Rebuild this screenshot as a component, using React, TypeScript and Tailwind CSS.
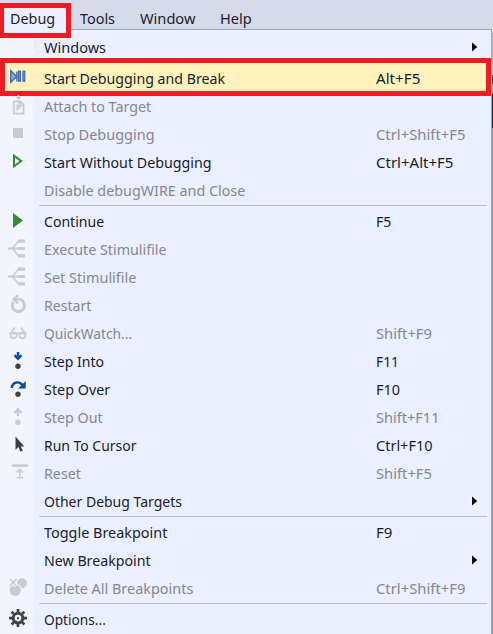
import { useLayoutEffect, useRef, type ReactNode } from 'react';

// Text condensed horizontally to a fixed advance width.
function Label({ text, width }: { text: string; width: number }) {
  const ref = useRef<HTMLSpanElement>(null);
  useLayoutEffect(() => {
    const el = ref.current;
    if (!el) return;
    el.style.transform = `scaleX(${width / el.offsetWidth})`;
  }, [text, width]);
  return (
    <span ref={ref} className="inline-block origin-left whitespace-pre">
      {text}
    </span>
  );
}

type IconName =
  | 'break' | 'attach' | 'stop' | 'playOutline' | 'play' | 'branch' | 'restart'
  | 'glasses' | 'into' | 'over' | 'out' | 'cursor' | 'reset' | 'breakpoints' | 'gear';

const g = '#c9cbd3';
const blue = '#00539c';

// Every drawing uses a 34 x 28 cell, the size of the gutter beside a row.
const icons: Record<IconName, ReactNode> = {
  break: (
    <g stroke="#3f61a8" strokeWidth="1.2">
      <path d="M10.7 6.5V18.5l6-6z" fill="#82a9e4" />
      <path d="M16.9 7.5v10" strokeWidth="1.4" />
      <rect x="18.6" y="7.2" width="1.8" height="10" fill="#8db4ee" />
      <rect x="23" y="7.2" width="1.8" height="10" fill="#8db4ee" />
    </g>
  ),
  attach: (
    <g fill="none" stroke={g} strokeWidth="1.7">
      <path d="M13.8 9.3h6.5l3.3 3.3v9.1h-9.8zM19.5 9.5v4h4" />
      <path d="M16.5 12v7l4.5-3.5z" fill={g} stroke="none" />
      <path d="M18.5 3v4M16.5 5l2 2 2-2" />
    </g>
  ),
  stop: <path d="M13 8h10v10H13z" fill={g} />,
  playOutline: <path d="M14 7.8v10.6l7.3-5.3z" fill="#f2f4fe" stroke="#388a34" strokeWidth="2" />,
  play: <path d="M13 5v15l10-7.5z" fill="#388a34" />,
  branch: (
    <g fill="none" stroke={g}>
      <path d="M8 12.5h16" strokeWidth="2.2" />
      <path d="M12.5 12.5l5.5-7h2M12.5 12.5l5.5 7h2" strokeWidth="1.5" />
      <path d="M18 5.2h7M18 19.8h7M19 12.5h6" strokeWidth="3.2" />
    </g>
  ),
  restart: (
    <g fill="none" stroke={g}>
      <path d="M13.4 9.8a6.1 6.1 0 1 0 7.6-2" strokeWidth="3" />
      <path d="M12.5 7.3h9M18 3.5l-4.5 3.8 4.5 3.8" strokeWidth="2.3" />
    </g>
  ),
  glasses: (
    <g fill="none" stroke={g} strokeWidth="1.7">
      <circle cx="13.6" cy="15.3" r="3" />
      <circle cx="22.4" cy="15.3" r="3" />
      <path d="M9 13.5h18M10.5 13.5l4.5-6M25.5 13.5L21 7.5" />
    </g>
  ),
  into: (
    <g>
      <path d="M18 4v6M14.5 7.2L18 10.8l3.5-3.6" fill="none" stroke={blue} strokeWidth="2.4" />
      <circle cx="18" cy="18.3" r="2.7" fill="#424242" />
    </g>
  ),
  over: (
    <g>
      <path d="M11.5 12C12.8 5.5 19.5 4.5 23 10" fill="none" stroke={blue} strokeWidth="2.4" />
      <path d="M25.7 5v7.5h-7.5z" fill={blue} />
      <circle cx="18" cy="18.3" r="2.7" fill="#424242" />
    </g>
  ),
  out: (
    <g>
      <path d="M18 12V6M14.5 8.8L18 5.2l3.5 3.6" fill="none" stroke={g} strokeWidth="2.4" />
      <circle cx="18" cy="18.3" r="2.7" fill={g} />
    </g>
  ),
  cursor: <path d="M15.5 4.5v13.3l3-2.7 2 4.7 2.3-1.1-2-4.3h3.5z" fill="#3c3c42" />,
  reset: (
    <g fill="none" stroke={g}>
      <path d="M12 5.6h16" strokeWidth="2.6" />
      <path d="M19.8 10v8M16.5 12.6l3.3-3.3 3.3 3.3M16.5 17.8h6.6" strokeWidth="1.6" />
    </g>
  ),
  breakpoints: (
    <g>
      <circle cx="22" cy="9.2" r="5" fill={g} />
      <circle cx="15.2" cy="16.3" r="6.7" fill="#f2f4fe" />
      <circle cx="15.2" cy="16.3" r="5.6" fill={g} />
      <path d="M10 5l6.5 7M16.5 5L10 12" stroke="#f2f4fe" strokeWidth="3.6" />
      <path d="M10 5l6.5 7M16.5 5L10 12" stroke={g} strokeWidth="1.6" />
    </g>
  ),
  gear: (
    <g fill="none" stroke="#424242">
      <circle cx="18" cy="13.1" r="4.8" strokeWidth="3" />
      <path
        d="M18 4.1v3M18 19.1v3M9 13.1h3M24 13.1h3M11.6 6.7l2.2 2.2M22.2 17.3l2.2 2.2M24.4 6.7l-2.2 2.2M13.8 17.3l-2.2 2.2"
        strokeWidth="2.7"
      />
      <circle cx="18" cy="13.1" r="1.2" fill="#424242" stroke="none" />
    </g>
  ),
};

interface Item {
  text: string;
  w: number;
  keys?: string;
  kw?: number;
  icon?: IconName;
  off?: boolean;
  sub?: boolean;
  hot?: boolean;
}

const groups: Item[][] = [
  [
    { text: 'Windows', w: 62, sub: true },
    { text: 'Start Debugging and Break', w: 181.5, keys: 'Alt+F5', kw: 44.5, icon: 'break', hot: true },
    { text: 'Attach to Target', w: 107, icon: 'attach', off: true },
    { text: 'Stop Debugging', w: 111, keys: 'Ctrl+Shift+F5', kw: 89, icon: 'stop', off: true },
    { text: 'Start Without Debugging', w: 167, keys: 'Ctrl+Alt+F5', kw: 77, icon: 'playOutline' },
    { text: 'Disable debugWIRE and Close', w: 201.5, off: true },
  ],
  [
    { text: 'Continue', w: 60, keys: 'F5', kw: 15, icon: 'play' },
    { text: 'Execute Stimulifile', w: 123, icon: 'branch', off: true },
    { text: 'Set Stimulifile', w: 92.5, icon: 'branch', off: true },
    { text: 'Restart', w: 47, icon: 'restart', off: true },
    { text: 'QuickWatch...', w: 88, keys: 'Shift+F9', kw: 56, icon: 'glasses', off: true },
    { text: 'Step Into', w: 60, keys: 'F11', kw: 23, icon: 'into' },
    { text: 'Step Over', w: 66, keys: 'F10', kw: 24, icon: 'over' },
    { text: 'Step Out', w: 59, keys: 'Shift+F11', kw: 63, icon: 'out', off: true },
    { text: 'Run To Cursor', w: 92, keys: 'Ctrl+F10', kw: 57, icon: 'cursor' },
    { text: 'Reset', w: 37, keys: 'Shift+F5', kw: 56, icon: 'reset', off: true },
    { text: 'Other Debug Targets', w: 138, sub: true },
  ],
  [
    { text: 'Toggle Breakpoint', w: 123, keys: 'F9', kw: 16 },
    { text: 'New Breakpoint', w: 107, sub: true },
    { text: 'Delete All Breakpoints', w: 149, keys: 'Ctrl+Shift+F9', kw: 89, icon: 'breakpoints', off: true },
  ],
  [{ text: 'Options...', w: 62, icon: 'gear' }],
];

function Row({ item, low }: { item: Item; low: boolean }) {
  return (
    <div className={`relative flex h-7 items-center ${item.off ? 'text-[#85878d]' : 'text-[#1b1b2c]'} ${item.hot ? 'mt-[3px] bg-[#fff2bd] shadow-[0_-1px_#fff2bd]' : ''}`}>
      <div className={`h-7 w-[34px] shrink-0 ${low ? 'pt-px' : ''}`}>
        {item.icon && (
          <svg width="34" height="28" viewBox="0 0 34 28">
            {icons[item.icon]}
          </svg>
        )}
      </div>
      <div className="w-[342px] shrink-0 pl-2.5">
        <Label text={item.text} width={item.w} />
      </div>
      <div className="w-[96px] shrink-0">{item.keys && <Label text={item.keys} width={item.kw ?? 0} />}</div>
      {item.sub && (
        <svg width="6" height="10" viewBox="0 0 6 10">
          <path d="M0 .5v9L5.2 5z" fill="#000" />
        </svg>
      )}
      {item.hot && <div className="absolute -top-1.5 left-0 h-[38px] w-[491px] border-5 border-[#ed1c24]" />}
    </div>
  );
}

export default function App() {
  return (
    <div className="relative flex h-[634px] w-[493px] flex-col overflow-hidden bg-[#d6dbe9] font-['Noto_Sans','Open_Sans',sans-serif] text-[15px] leading-7 text-[#1b1b2c]">
      <nav className="flex h-[29px] shrink-0 pt-1">
        <div className="relative flex w-[80px]">
          <div className="mt-[3px] flex h-[30px] w-[67px] border-t border-[#9ba7b7] bg-[#eaf0ff] pl-2.5">
            <span className="-mt-1"><Label text="Debug" width={45} /></span>
          </div>
          <div className="absolute -top-px left-0 z-10 h-[35px] w-[71px] border-5 border-l-4 border-[#ed1c24]" />
        </div>
        <div className="w-[60px]"><Label text="Tools" width={35.5} /></div>
        <div className="w-[80px]"><Label text="Window" width={55.5} /></div>
        <Label text="Help" width={32} />
      </nav>
      <div className="flex grow">
        <main className="w-[492px] border-t border-r border-[#9ba7b7] bg-[linear-gradient(to_right,#f2f4fe_33px,#eaf0ff_33px)] pt-[3px]">
          {groups.map((items, i) => (
            <section key={i}>
              {i > 0 && (
                <div className="h-[3px] pt-px pr-[4px] pl-[39px]">
                  <div className="h-px bg-[#bbc0cf]" />
                </div>
              )}
              {items.map((item) => (
                <Row key={item.text} item={item} low={i === 1} />
              ))}
            </section>
          ))}
        </main>
        <div className="flex w-px flex-col pt-1">
          <div className="h-[42px] bg-[#b5b9c5]" />
          <div className="h-[9px] bg-[#32466f]" />
          <div className="h-[10px] bg-[#8b919c]" />
          <div className="h-[34px] bg-[#1d2638]" />
          <div className="grow bg-[#8b919c]" />
        </div>
      </div>
    </div>
  );
}
